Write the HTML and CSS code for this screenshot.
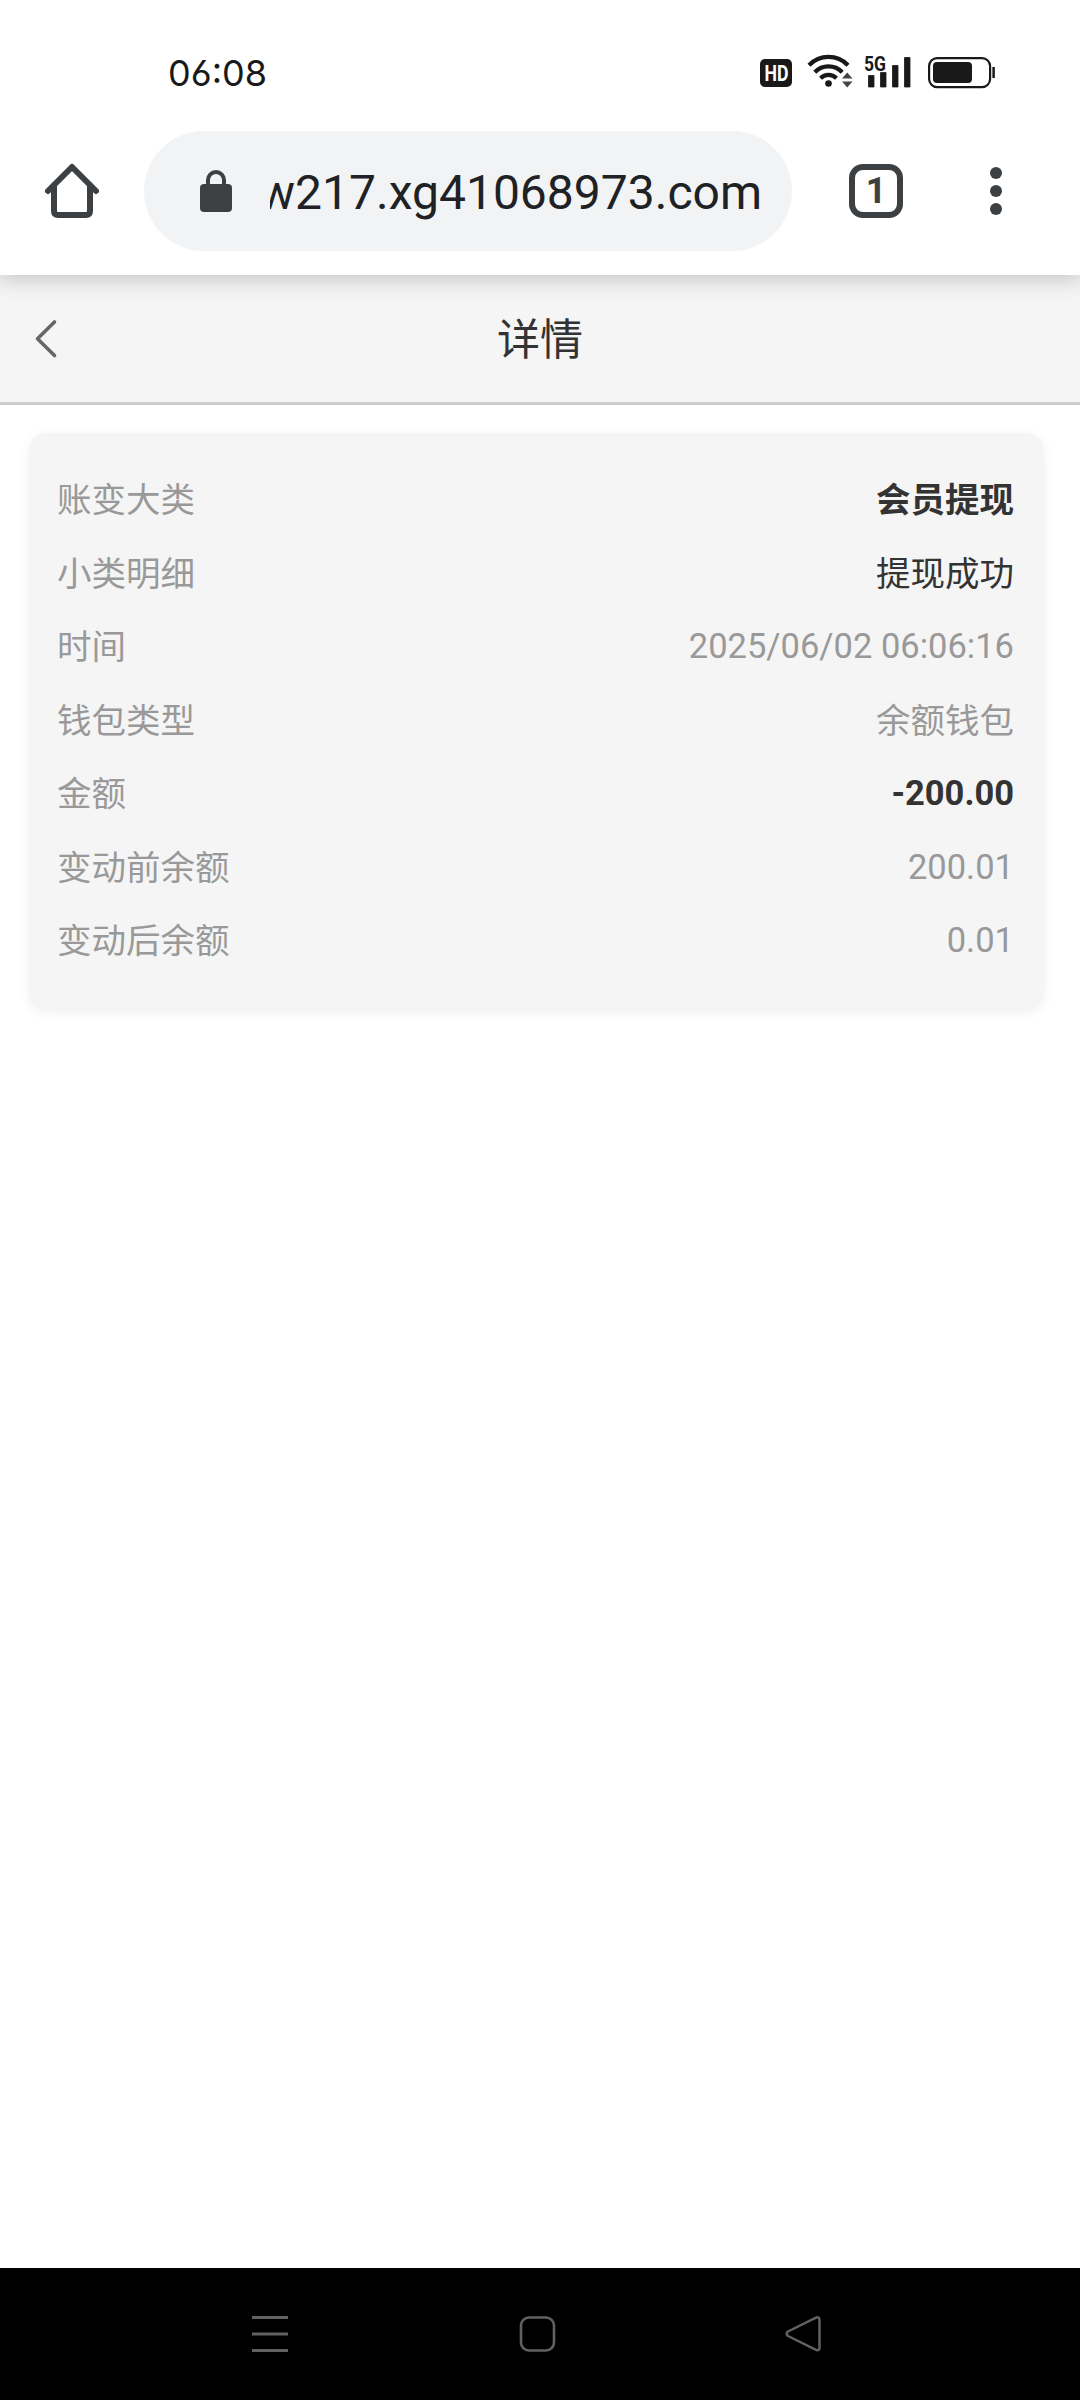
FILE: index.html
```
<!DOCTYPE html>
<html lang="zh-CN">
<head>
<meta charset="utf-8">
<title>详情</title>
<link rel="stylesheet" href="styles.css">
</head>
<body>
<div class="screen">
  <div class="status-bar">
    <span class="clock">06:08</span>
    <div class="status-icons">
      <svg width="32" height="28" viewBox="0 0 32 28"><rect width="32" height="28" rx="5" fill="#191919"/><text class="hd" x="4.5" y="22" textLength="24" lengthAdjust="spacingAndGlyphs">HD</text></svg>
      <svg class="wifi" width="46" height="36" viewBox="0 0 46 36"><g fill="none" stroke="#191919" stroke-width="4.2"><path d="M2 12.2A27 27 0 0 1 41 12.2"/><path d="M7.800 19.200A19 19 0 0 1 35.200 19.200"/><path d="M13.500 25.200A11.500 11.500 0 0 1 29.500 25.200"/></g><circle cx="21.500" cy="30.500" r="3.300" fill="#191919"/><path d="M35 25.500h10.500L40.200 19.500zM35 28.500h10.500L40.200 34.500z" fill="#444"/></svg>
      <svg class="signal" width="48" height="34" viewBox="0 0 48 34"><path d="M4.500 21.500h5.500V33H4.500zM16.500 18.500H22V33H16.500zM28.500 11.500H34V33H28.500zM40.500 3.500H46V33H40.500z" fill="#191919" stroke="#191919" stroke-width=".8" stroke-linejoin="round"/><text class="net" x="0" y="16.500" textLength="22" lengthAdjust="spacingAndGlyphs">5G</text></svg>
      <svg class="battery" width="68" height="32" viewBox="0 0 68 32"><rect x="1.100" y="1.100" width="61" height="29" rx="8" fill="none" stroke="#191919" stroke-width="2.200"/><rect x="5" y="5" width="39" height="21" rx="4" fill="#191919"/><path d="M65.600 10v11" stroke="#191919" stroke-width="2.500"/></svg>
    </div>
  </div>
  <div class="toolbar">
    <svg class="home" width="56" height="56" viewBox="0 0 56 56" fill="none" stroke="#3c4043" stroke-width="6" stroke-linejoin="round" stroke-linecap="round"><path d="M4 28L28 4L52 28M10 22V48Q10 52 14 52H42Q46 52 46 48V22"/></svg>
    <div class="address">
      <svg width="32" height="42" viewBox="0 0 32 42"><rect y="14" width="32" height="28" rx="4" fill="#3c4043"/><path d="M8 15V10a8 8 0 0 1 16 0v5" fill="none" stroke="#3c4043" stroke-width="4"/></svg>
      <div class="url"><span>w217.xg41068973.com</span></div>
    </div>
    <div class="tabs">1</div>
    <svg class="more" width="12" height="48" viewBox="0 0 12 48" fill="#3c4043"><circle cx="6" cy="6" r="6"/><circle cx="6" cy="24" r="6"/><circle cx="6" cy="42" r="6"/></svg>
  </div>
  <header class="page-header">
    <svg class="back" width="24" height="38" viewBox="0 0 24 38"><path d="M20.500 2L3.500 18.700L20.500 35.500" fill="none" stroke="#666" stroke-width="3.600" stroke-linecap="round" stroke-linejoin="round"/></svg>
    <h1>详情</h1>
  </header>
  <main class="content">
    <dl class="card">
      <div class="row"><dt>账变大类</dt><dd class="dark bold cjk">会员提现</dd></div>
      <div class="row"><dt>小类明细</dt><dd class="dark cjk">提现成功</dd></div>
      <div class="row"><dt>时间</dt><dd>2025/06/02 06:06:16</dd></div>
      <div class="row"><dt>钱包类型</dt><dd class="cjk">余额钱包</dd></div>
      <div class="row"><dt>金额</dt><dd class="dark bold">-200.00</dd></div>
      <div class="row"><dt>变动前余额</dt><dd>200.01</dd></div>
      <div class="row"><dt>变动后余额</dt><dd>0.01</dd></div>
    </dl>
  </main>
  <nav class="nav-bar">
    <svg width="38" height="38" viewBox="0 0 38 38"><path d="M1 2.500H37M1 19H37M1 35.500H37" stroke="#616161" stroke-width="3"/></svg>
    <svg width="38" height="38" viewBox="0 0 38 38"><rect x="3" y="2.500" width="33" height="33" rx="8" fill="none" stroke="#616161" stroke-width="2.600"/></svg>
    <svg width="38" height="38" viewBox="0 0 38 38"><path d="M3 16.500L30.500 2.800Q34.500 1.300 34.500 5V32.500Q34.500 36.200 30.500 34.700L3 21Q.300 18.700 3 16.500Z" fill="none" stroke="#616161" stroke-width="2.500" stroke-linejoin="round"/></svg>
  </nav>
</div>
</body>
</html>
```
FILE: styles.css
```
* { box-sizing: border-box; }
body {
  margin: 0;
  background: #fff;
  font-family: Roboto, "Noto Sans CJK SC", sans-serif;
}
svg { display: block; flex: none; overflow: visible; }
.screen { display: flex; flex-direction: column; width: 1080px; height: 2400px; }

.status-bar {
  display: flex;
  justify-content: space-between;
  height: 112px;
  padding: 50px 84px 0 168px;
}
.clock {
  font: 36px/46px Inter, sans-serif;
  font-feature-settings: "ss01";
  color: #191919;
}
.status-icons { display: flex; align-items: flex-start; padding-top: 3px; }
.status-icons > svg:first-child { margin-top: 6px; }
.hd { font: 700 22px Roboto, sans-serif; fill: #fff; }
.net { font: 700 20px Roboto, sans-serif; fill: #191919; stroke: #fff; stroke-width: 2px; paint-order: stroke; }
.wifi { margin-left: 15px; }
.signal { margin: 1px 0 0 11px; }
.battery { margin: 4px 0 0 16px; }

.toolbar {
  display: flex;
  align-items: center;
  height: 163px;
  padding: 0 78px 5px 44px;
  background: #fff;
  box-shadow: 0 0 22px 2px rgba(0, 0, 0, .24);
  z-index: 1;
  clip-path: inset(0 0 -30px 0);
}
.home { margin-right: 44px; }
.address {
  display: flex;
  align-items: center;
  width: 648px;
  height: 120px;
  padding: 0 30px 0 56px;
  border-radius: 60px;
  background: #f1f3f4;
}
.url {
  display: flex;
  justify-content: flex-end;
  width: 492px;
  margin-left: 38px;
  padding-top: 3px;
  overflow: hidden;
  font-size: 48px;
  line-height: 64px;
  color: #202124;
}
.tabs {
  width: 54px;
  height: 54px;
  margin-left: 57px;
  border: 6px solid #3c4043;
  border-radius: 14px;
  font-size: 36px;
  font-weight: 700;
  line-height: 43px;
  text-align: center;
  color: #3c4043;
}
.more { margin-left: auto; }

.page-header {
  display: grid;
  grid-template-columns: 60px 1fr 60px;
  align-items: center;
  height: 130px;
  background: #f5f5f5;
  border-bottom: 3px solid #cdcdcd;
}
.back { margin-left: 34px; }
h1 { margin: 0; padding-top: 3px; font-size: 43px; font-weight: 400; line-height: 60px; text-align: center; color: #333; }

.content { flex: 1; padding: 28px 36px 0 29px; }
.card {
  margin: 0;
  height: 577px;
  padding: 30px 30px 30px 28px;
  border-radius: 18px;
  background: #f5f5f5;
  box-shadow: 0 3px 12px rgba(0, 0, 0, .06);
}
.row {
  display: flex;
  justify-content: space-between;
  height: 73.5px;
  font-size: 34.5px;
  line-height: 73.5px;
  color: #999;
}
dd { margin: 0; }
dt, .cjk { padding-top: 1px; }
.dark { color: #333; }
.bold { font-weight: 700; }

.nav-bar {
  display: flex;
  align-items: center;
  justify-content: space-between;
  height: 132px;
  padding: 0 257px 0 251px;
  background: #000;
}
```
